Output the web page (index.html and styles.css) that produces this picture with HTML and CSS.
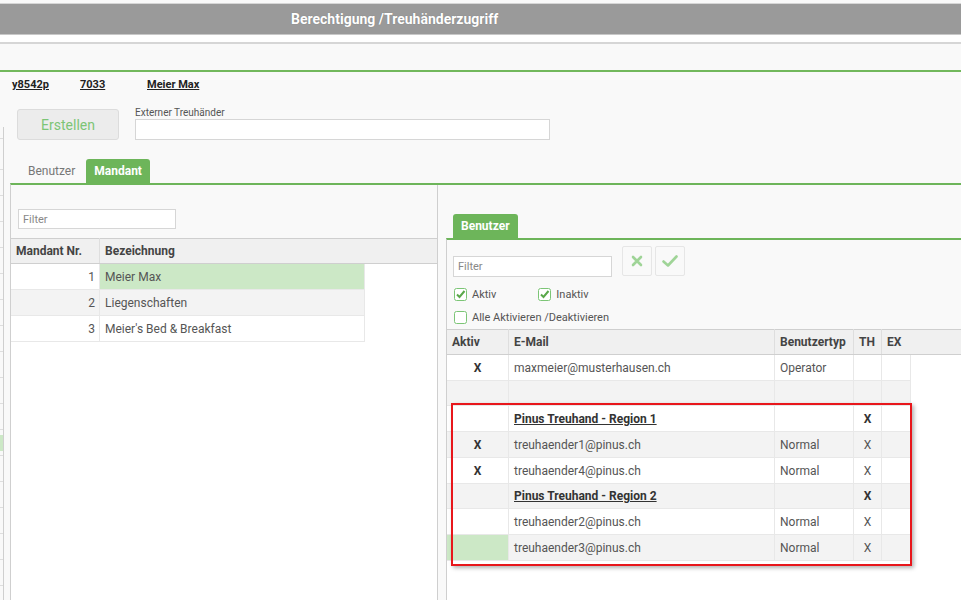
FILE: index.html
```html
<!DOCTYPE html>
<html lang="de">
  <head>
    <meta charset="UTF-8" />
    <title>Berechtigung /Treuhänderzugriff</title>
    <link rel="stylesheet" href="styles.css">
  </head>
  <body>
    <div class="titlebar">Berechtigung /Treuhänderzugriff</div>
    <div class="toolbar"><div class="toolbar-inner"></div></div>

    <div class="info">
      <a class="info-user">y8542p</a>
      <a class="info-nr">7033</a>
      <a class="info-name">Meier Max</a>
    </div>

    <div class="work">
      <div class="strip"><div class="strip-sel"></div></div>

      <div class="main">
        <div class="create-row">
          <button class="btn-create">Erstellen</button>
          <div class="field">
            <label for="ext">Externer Treuhänder</label>
            <input type="text" id="ext" class="input-ext" />
          </div>
        </div>

        <div class="tabs">
          <div class="tab">Benutzer</div>
          <div class="tab active">Mandant</div>
        </div>

        <div class="panel">
          <div class="left-col">
            <input type="text" class="filter" placeholder="Filter" />
            <div class="grid-wrap">
              <table class="grid mandant-grid">
                <thead>
                  <tr>
                    <th class="col-nr">Mandant Nr.</th>
                    <th class="col-bez last">Bezeichnung</th>
                    <th class="col-fill"></th>
                  </tr>
                </thead>
                <tbody>
                  <tr>
                    <td class="num">1</td>
                    <td class="selected">Meier Max</td>
                    <td class="fill"></td>
                  </tr>
                  <tr class="alt">
                    <td class="num">2</td>
                    <td>Liegenschaften</td>
                    <td class="fill"></td>
                  </tr>
                  <tr>
                    <td class="num">3</td>
                    <td>Meier's Bed &amp; Breakfast</td>
                    <td class="fill"></td>
                  </tr>
                </tbody>
              </table>
            </div>
          </div>

          <div class="right-col">
            <div class="tabs sub-tabs">
              <div class="tab active">Benutzer</div>
            </div>
            <div class="right-body">
              <div class="filter-row">
                <input type="text" class="filter filter-user" placeholder="Filter" />
                <button class="icon-btn" title="Abbrechen">
                  <svg width="12" height="12" viewBox="0 0 12 12"><path d="M2 2 L10 10 M10 2 L2 10" stroke="#9fd497" stroke-width="2.6" stroke-linecap="round"/></svg>
                </button>
                <button class="icon-btn" title="Speichern">
                  <svg width="16" height="12" viewBox="0 0 16 12"><path d="M1.5 6.5 L6 10.5 L14.5 1.5" stroke="#9fd497" stroke-width="2.6" fill="none" stroke-linecap="round" stroke-linejoin="round"/></svg>
                </button>
              </div>

              <div class="check-row">
                <label class="check">
                  <svg width="13" height="13" viewBox="0 0 13 13"><rect x="0.5" y="0.5" width="12" height="12" rx="2" fill="#fff" stroke="#7cc576"/><path d="M3 6.5 L5.5 9 L10.5 3" stroke="#5aa84a" stroke-width="2" fill="none"/></svg>
                  Aktiv
                </label>
                <label class="check check-inaktiv">
                  <svg width="13" height="13" viewBox="0 0 13 13"><rect x="0.5" y="0.5" width="12" height="12" rx="2" fill="#fff" stroke="#7cc576"/><path d="M3 6.5 L5.5 9 L10.5 3" stroke="#5aa84a" stroke-width="2" fill="none"/></svg>
                  Inaktiv
                </label>
              </div>
              <div class="check-row check-all">
                <label class="check">
                  <svg width="13" height="13" viewBox="0 0 13 13"><rect x="0.5" y="0.5" width="12" height="12" rx="2" fill="#fff" stroke="#7cc576"/></svg>
                  Alle Aktivieren /Deaktivieren
                </label>
              </div>

              <div class="grid-wrap user-wrap">
                <table class="grid user-grid">
                  <thead>
                    <tr>
                      <th class="c-aktiv">Aktiv</th>
                      <th class="c-mail">E-Mail</th>
                      <th class="c-typ">Benutzertyp</th>
                      <th class="c-th">TH</th>
                      <th class="c-ex last">EX</th>
                      <th class="col-fill"></th>
                    </tr>
                  </thead>
                  <tbody>
                    <tr>
                      <td class="mark">X</td>
                      <td>maxmeier@musterhausen.ch</td>
                      <td>Operator</td>
                      <td></td>
                      <td></td>
                      <td class="fill"></td>
                    </tr>
                    <tr class="alt short">
                      <td></td>
                      <td></td>
                      <td></td>
                      <td></td>
                      <td></td>
                      <td class="fill"></td>
                    </tr>
                    <tr>
                      <td></td>
                      <td class="group">Pinus Treuhand - Region 1</td>
                      <td></td>
                      <td class="mark">X</td>
                      <td></td>
                      <td class="fill"></td>
                    </tr>
                    <tr class="alt">
                      <td class="mark">X</td>
                      <td>treuhaender1@pinus.ch</td>
                      <td>Normal</td>
                      <td class="center">X</td>
                      <td></td>
                      <td class="fill"></td>
                    </tr>
                    <tr>
                      <td class="mark">X</td>
                      <td>treuhaender4@pinus.ch</td>
                      <td>Normal</td>
                      <td class="center">X</td>
                      <td></td>
                      <td class="fill"></td>
                    </tr>
                    <tr class="alt short">
                      <td></td>
                      <td class="group">Pinus Treuhand - Region 2</td>
                      <td></td>
                      <td class="mark">X</td>
                      <td></td>
                      <td class="fill"></td>
                    </tr>
                    <tr>
                      <td></td>
                      <td>treuhaender2@pinus.ch</td>
                      <td>Normal</td>
                      <td class="center">X</td>
                      <td></td>
                      <td class="fill"></td>
                    </tr>
                    <tr class="alt">
                      <td class="selected"></td>
                      <td>treuhaender3@pinus.ch</td>
                      <td>Normal</td>
                      <td class="center">X</td>
                      <td></td>
                      <td class="fill"></td>
                    </tr>
                  </tbody>
                </table>
                <div class="highlight-box"></div>
              </div>
            </div>
          </div>
        </div>
      </div>
    </div>
  </body>
</html>
```

FILE: styles.css
```css
body {
  margin: 0;
  height: 600px;
  overflow: hidden;
  background-color: #f9f9f9;
  font-family: Roboto, "Liberation Sans", Arial, sans-serif;
  font-size: 12px;
  color: #555;
  display: flex;
  flex-direction: column;
}

/* top bars */
.titlebar {
  margin-top: 3px;
  height: 30px;
  line-height: 30px;
  border-top: 1px solid #d6d6d6;
  border-bottom: 1px solid #c8c8c8;
  background-color: #9a9a9a;
  color: #fff;
  font-size: 14px;
  font-weight: bold;
  padding-left: 291px;
  text-shadow: 0 0 1px rgba(0, 0, 0, 0.25);
}

.toolbar {
  background-color: #fff;
  padding-top: 7px;
}

.toolbar-inner {
  height: 26px;
  background-color: #f9f9f9;
  border-top: 2px solid #d6d6d6;
  border-bottom: 2px solid #72b85c;
}

/* info row */
.info {
  display: flex;
  padding: 5px 0 0 12px;
  height: 15px;
  line-height: 15px;
  font-size: 11px;
  font-weight: bold;
  color: #222;
}

.info a {
  text-decoration: underline;
}

.info-user {
  width: 68px;
}

.info-nr {
  width: 67px;
}

/* work area */
.work {
  flex: 1;
  display: flex;
  min-height: 0;
}

.strip {
  width: 3px;
  margin-top: 35px;
  border-right: 1px solid #cfcfcf;
  background: repeating-linear-gradient(to bottom, transparent 0 25px, #dedede 25px 26px);
  background-position: 0 17px;
}

.strip-sel {
  margin-top: 308px;
  height: 16px;
  background-color: #cce8c6;
}

.main {
  flex: 1;
  display: flex;
  flex-direction: column;
  min-width: 0;
}

.create-row {
  display: flex;
  align-items: flex-end;
  margin-top: 14px;
  padding-left: 13px;
}

.btn-create {
  width: 102px;
  height: 31px;
  background-color: #ececec;
  border: 1px solid #dcdcdc;
  border-radius: 3px;
  color: #7cc576;
  font-family: inherit;
  font-size: 14px;
}

.field {
  display: flex;
  flex-direction: column;
  margin-left: 16px;
}

.field label {
  font-size: 10px;
  line-height: 13px;
  color: #555;
}

.input-ext {
  width: 415px;
  height: 21px;
  box-sizing: border-box;
  border: 1px solid #d6d6d6;
  background-color: #fff;
}

/* tabs */
.tabs {
  display: flex;
  margin: 19px 0 0 6px;
  height: 24px;
}

.tab {
  padding: 0 9px;
  line-height: 25px;
  color: #777;
  margin-left: 9px;
}

.tab.active {
  margin-left: 2px;
  padding: 0 8px;
  background-color: #6db55a;
  color: #fff;
  font-weight: bold;
  border-radius: 3px 3px 0 0;
}

.panel {
  flex: 1;
  display: flex;
  margin-left: 6px;
  border-top: 2px solid #6db55a;
  border-left: 1px solid #cfcfcf;
  min-height: 0;
}

.filter {
  box-sizing: border-box;
  width: 158px;
  height: 20px;
  border: 1px solid #d6d6d6;
  background-color: #fff;
  padding: 0 4px;
  font-family: inherit;
  font-size: 11px;
}

.filter::placeholder {
  color: #888;
}

/* left column */
.left-col {
  width: 426px;
  display: flex;
  flex-direction: column;
  border-right: 1px solid #cfcfcf;
}

.left-col .filter {
  margin: 24px 0 0 7px;
}

.grid-wrap {
  flex: 1;
  background-color: #fff;
  margin-top: 9px;
}

.grid {
  border-collapse: collapse;
  width: 100%;
  table-layout: fixed;
}

.grid th {
  height: 24px;
  background-color: #f0f0f0;
  border-top: 1px solid #cfcfcf;
  border-bottom: 1px solid #cfcfcf;
  border-right: 1px solid #dedede;
  text-align: left;
  padding: 0 5px;
  color: #444;
  font-weight: bold;
}

.grid th.last,
.grid th.col-fill {
  border-right: none;
}

.grid td {
  height: 25px;
  padding: 0 5px;
  border-bottom: 1px solid #e8e8e8;
  border-right: 1px solid #e8e8e8;
  white-space: nowrap;
}

.grid tr.short td {
  height: 24px;
}

.grid td.fill {
  border: none;
  background-color: #fff;
}

.grid tr.alt td {
  background-color: #f3f3f3;
}

.grid tr.alt td.fill {
  background-color: #fff;
}

.grid td.selected,
.grid tr.alt td.selected {
  background-color: #cce8c6;
}

.col-nr {
  width: 78px;
}

.col-bez {
  width: 254px;
}

.grid td.num {
  text-align: right;
  padding-right: 4px;
}

/* right column */
.right-col {
  flex: 1;
  display: flex;
  flex-direction: column;
  margin-left: 8px;
  min-width: 0;
}

.sub-tabs {
  margin: 29px 0 0 5px;
}

.right-body {
  flex: 1;
  display: flex;
  flex-direction: column;
  border-top: 2px solid #6db55a;
  border-left: 1px solid #cfcfcf;
}

.filter-row {
  display: flex;
  align-items: flex-start;
  padding: 6px 0 0 6px;
}

.filter-user {
  width: 159px;
  height: 21px;
  margin: 10px 10px 0 0;
}

.icon-btn {
  width: 30px;
  height: 30px;
  margin-right: 3px;
  border: 1px solid #e6e6e6;
  border-radius: 2px;
  background-color: #f9f9f9;
  display: flex;
  align-items: center;
  justify-content: center;
  padding: 0;
}

.check-row {
  display: flex;
  padding: 10px 0 0 7px;
  height: 14px;
}

.check-all {
  padding-top: 9px;
}

.check {
  display: flex;
  align-items: center;
  gap: 5px;
  color: #555;
  font-size: 11px;
}

.check-inaktiv {
  margin-left: 42px;
}

.user-wrap {
  position: relative;
  margin-top: 5px;
}

.c-aktiv {
  width: 51px;
}

.c-mail {
  width: 255px;
}

.c-typ {
  width: 68px;
}

.c-th {
  width: 17px;
}

.c-ex {
  width: 18px;
}

.grid td.mark {
  text-align: center;
  font-weight: bold;
  color: #333;
}

.grid td.center {
  text-align: center;
}

.grid td.group {
  font-weight: bold;
  color: #333;
  text-decoration: underline;
}

.highlight-box {
  position: absolute;
  top: 74px;
  left: 4px;
  width: 457px;
  height: 159px;
  border: 2px solid #e8161b;
  box-shadow: 2px 2px 4px rgba(0, 0, 0, 0.3);
}
```
